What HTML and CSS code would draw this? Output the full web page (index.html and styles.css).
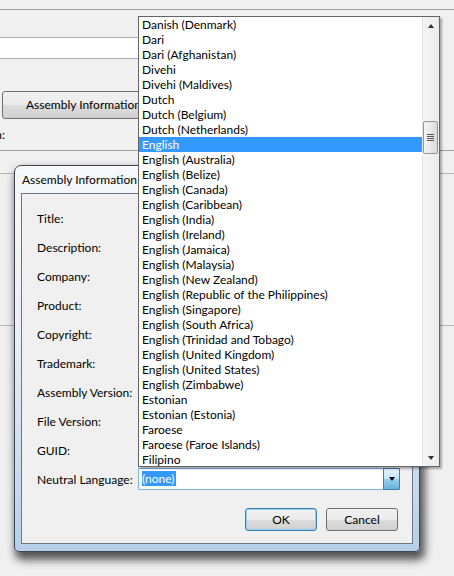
FILE: index.html
```html
<!DOCTYPE html>
<html>
<head>
<meta charset="utf-8">
<link rel="stylesheet" href="styles.css">
</head>
<body>
<div class="desk">
  <div class="bg">
    <div class="bg-top"></div>
    <div class="bg-field"></div>
    <div class="bg-btn"><span class="bg-btn-text">Assembly Information...</span></div>
    <div class="bg-label"><span>Assembly version:</span></div>
    <div class="bg-sep"></div>
    <div class="bg-rule bg-rule-a"></div>
    <div class="bg-rule bg-rule-b"></div>
  </div>

  <div class="dialog">
    <div class="dialog-title">Assembly Information</div>
    <div class="client">
      <div class="form">
        <label class="lbl">Title:</label><div class="tb"></div>
        <label class="lbl">Description:</label><div class="tb"></div>
        <label class="lbl">Company:</label><div class="tb"></div>
        <label class="lbl">Product:</label><div class="tb"></div>
        <label class="lbl">Copyright:</label><div class="tb"></div>
        <label class="lbl">Trademark:</label><div class="tb"></div>
        <label class="lbl">Assembly Version:</label><div class="tb"></div>
        <label class="lbl">File Version:</label><div class="tb"></div>
        <label class="lbl">GUID:</label><div class="tb"></div>
        <label class="lbl">Neutral Language:</label>
        <div class="combo">
          <div class="combo-text"><span class="combo-sel">(none)</span></div>
          <div class="combo-btn"><span class="tri-down"></span></div>
        </div>
      </div>
      <div class="actions">
        <div class="btn btn-default">OK</div>
        <div class="btn">Cancel</div>
      </div>
    </div>
  </div>

  <div class="droplist">
    <div class="items">
      <div class="item">Danish (Denmark)</div>
      <div class="item">Dari</div>
      <div class="item">Dari (Afghanistan)</div>
      <div class="item">Divehi</div>
      <div class="item">Divehi (Maldives)</div>
      <div class="item">Dutch</div>
      <div class="item">Dutch (Belgium)</div>
      <div class="item">Dutch (Netherlands)</div>
      <div class="item sel">English</div>
      <div class="item">English (Australia)</div>
      <div class="item">English (Belize)</div>
      <div class="item">English (Canada)</div>
      <div class="item">English (Caribbean)</div>
      <div class="item">English (India)</div>
      <div class="item">English (Ireland)</div>
      <div class="item">English (Jamaica)</div>
      <div class="item">English (Malaysia)</div>
      <div class="item">English (New Zealand)</div>
      <div class="item">English (Republic of the Philippines)</div>
      <div class="item">English (Singapore)</div>
      <div class="item">English (South Africa)</div>
      <div class="item">English (Trinidad and Tobago)</div>
      <div class="item">English (United Kingdom)</div>
      <div class="item">English (United States)</div>
      <div class="item">English (Zimbabwe)</div>
      <div class="item">Estonian</div>
      <div class="item">Estonian (Estonia)</div>
      <div class="item">Faroese</div>
      <div class="item">Faroese (Faroe Islands)</div>
      <div class="item">Filipino</div>
    </div>
    <div class="scroll">
      <div class="sb-arrow"><span class="sb-up"></span></div>
      <div class="sb-track">
        <div class="sb-thumb">
          <div class="grip"><i></i><i></i><i></i><i></i></div>
        </div>
      </div>
      <div class="sb-arrow"><span class="sb-down"></span></div>
    </div>
  </div>
</div>
</body>
</html>
```

FILE: styles.css
```css
html, body {
  margin: 0;
  padding: 0;
  background: #f0f0f0;
}
body {
  font-family: Lato, "Open Sans", sans-serif;
  font-size: 12px;
  color: #000;
}
.desk {
  position: relative;
  width: 454px;
  height: 576px;
  overflow: hidden;
  background: #f0f0f0;
}

/* background window */
.bg-top {
  height: 9px;
  border-bottom: 1px solid #a0a0a0;
}
.bg-field {
  margin-top: 27px;
  width: 170px;
  height: 22px;
  box-sizing: border-box;
  background: #fff;
  border: 1px solid #abadb3;
  border-left: none;
}
.bg-btn {
  margin: 32px 0 0 2px;
  width: 200px;
  height: 28px;
  box-sizing: border-box;
  border: 1px solid #707070;
  border-radius: 3px;
  background: linear-gradient(#f2f2f2 0%, #ebebeb 50%, #dddddd 51%, #cfcfcf 100%);
  padding-left: 23px;
  line-height: 26px;
  white-space: nowrap;
}
.bg-btn-text {
  display: inline-block;
  width: 112px;
  overflow: hidden;
  vertical-align: top;
}
.bg-label {
  margin-top: 8px;
  width: 5px;
  height: 15px;
  line-height: 15px;
  display: flex;
  justify-content: flex-end;
  overflow: hidden;
  white-space: nowrap;
}
.bg-sep {
  margin-top: 8px;
  height: 1px;
  background: #a0a0a0;
}
.bg-rule {
  height: 1px;
  background: #b4b4b4;
}
.bg-rule-a { margin-top: 22px; }
.bg-rule-b { margin-top: 151px; }

/* dialog window */
.dialog {
  position: absolute;
  left: 14px;
  top: 165px;
  width: 406px;
  height: 387px;
  box-sizing: border-box;
  border: 1px solid #3f4650;
  border-radius: 7px 7px 5px 5px;
  background: linear-gradient(#f6f8fb 0%, #e9eff6 45%, #c9dbef 80%, #b7cfe9 100%);
  box-shadow: 3px 6px 9px 2px rgba(0, 0, 0, 0.65);
  padding: 0 6px 7px;
  display: flex;
  flex-direction: column;
}
.dialog-title {
  height: 27px;
  line-height: 28px;
  padding-left: 1px;
  white-space: nowrap;
}
.client {
  flex: 1;
  border: 1px solid #6b7787;
  background: #f0f0f0;
  padding: 13px 12px 0 15px;
}
.form {
  display: grid;
  grid-template-columns: 101px 262px;
  grid-auto-rows: 22px;
  row-gap: 7px;
}
.lbl {
  align-self: center;
  line-height: 15px;
  white-space: nowrap;
}
.tb {
  background: #fff;
  border: 1px solid #abadb3;
}
.combo {
  display: flex;
  box-sizing: border-box;
  height: 22px;
  background: #fff;
  border: 1px solid #7eb4ea;
}
.combo-text {
  flex: 1;
  padding: 2px 3px;
  line-height: 15px;
}
.combo-sel {
  display: inline-block;
  background: #3399ff;
  color: #fff;
  padding-right: 1px;
}
.combo-btn {
  width: 15px;
  margin: -1px -1px -1px 0;
  border: 1px solid #3c7fb1;
  border-radius: 0 2px 2px 0;
  background: linear-gradient(#e5f4fc 0%, #c4e5f6 50%, #98d1ef 51%, #68b3db 100%);
  display: flex;
  align-items: center;
  justify-content: center;
}
.tri-down {
  width: 0;
  height: 0;
  border-left: 3.5px solid transparent;
  border-right: 3.5px solid transparent;
  border-top: 4px solid #000;
}
.actions {
  display: flex;
  justify-content: flex-end;
  gap: 9px;
  margin-top: 18px;
  padding-right: 2px;
}
.btn {
  width: 72px;
  height: 23px;
  box-sizing: border-box;
  border: 1px solid #707070;
  border-radius: 3px;
  background: linear-gradient(#f2f2f2 0%, #ebebeb 50%, #dddddd 51%, #cfcfcf 100%);
  text-align: center;
  line-height: 21px;
}
.btn-default {
  border-color: #3c7fb1;
  box-shadow: inset 0 0 0 1px #8ed0f4;
}

/* dropdown list */
.droplist {
  position: absolute;
  left: 138px;
  top: 16px;
  width: 302px;
  height: 451px;
  box-sizing: border-box;
  border: 1px solid #646464;
  background: #fff;
  display: flex;
  box-shadow: 2px 2px 2px rgba(0, 0, 0, 0.3);
}
.items {
  flex: 1;
  overflow: hidden;
}
.item {
  height: 15px;
  line-height: 15px;
  padding-left: 3px;
  white-space: nowrap;
}
.item.sel {
  background: #3399ff;
  color: #fff;
}
.scroll {
  width: 17px;
  display: flex;
  flex-direction: column;
  background: linear-gradient(90deg, #e3e3e3 0, #e3e3e3 1px, #f4f4f4 1px, #ececec 100%);
}
.sb-arrow {
  height: 17px;
  display: flex;
  align-items: center;
  justify-content: center;
}
.sb-up {
  width: 0;
  height: 0;
  border-left: 3.5px solid transparent;
  border-right: 3.5px solid transparent;
  border-bottom: 4px solid #333;
}
.sb-down {
  width: 0;
  height: 0;
  border-left: 3.5px solid transparent;
  border-right: 3.5px solid transparent;
  border-top: 4px solid #333;
}
.sb-track {
  flex: 1;
  padding-top: 87px;
}
.sb-thumb {
  margin-left: 1px;
  width: 15px;
  height: 33px;
  box-sizing: border-box;
  border: 1px solid #979797;
  border-radius: 2px;
  background: linear-gradient(90deg, #f4f4f4 0%, #e9e9e9 50%, #d9d9d9 100%);
  display: flex;
  align-items: center;
  justify-content: center;
}
.grip {
  display: flex;
  flex-direction: column;
  gap: 1px;
}
.grip i {
  display: block;
  width: 7px;
  height: 1px;
  background: #555;
}
```
